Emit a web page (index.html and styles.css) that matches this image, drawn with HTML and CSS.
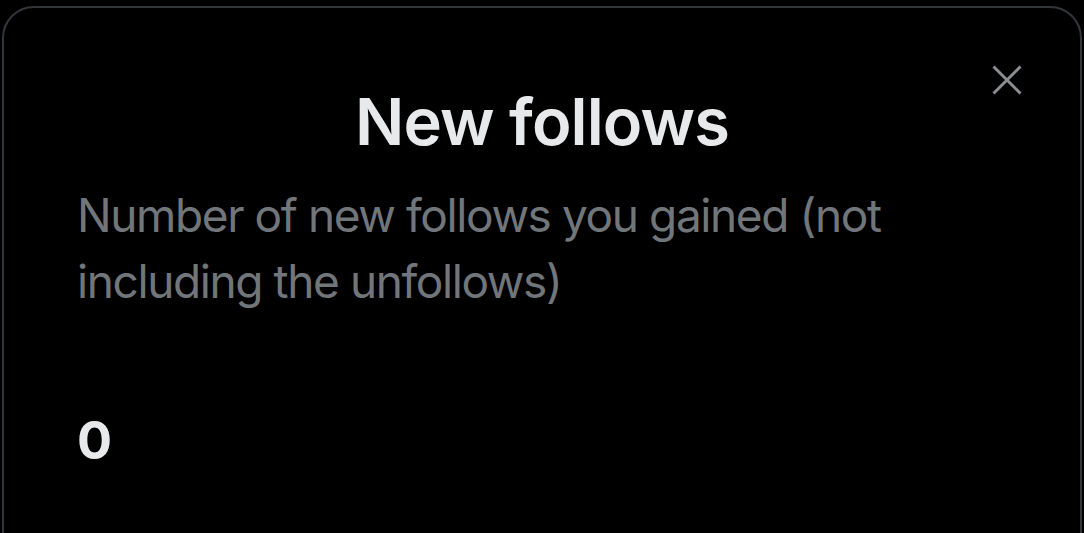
FILE: index.html
```html
<!DOCTYPE html>
<html lang="en">
<head>
  <meta charset="UTF-8">
  <meta name="viewport" content="width=device-width, initial-scale=1">
  <title>New follows</title>
  <link rel="stylesheet" href="styles.css">
</head>
<body>

  <div class="card">
    <button class="close-btn" aria-label="Close">
      <svg viewBox="0 0 30 30" width="30" height="30">
        <path d="M1.5 1.5 L28.5 28.5 M28.5 1.5 L1.5 28.5" stroke="currentColor" stroke-width="3" fill="none"/>
      </svg>
    </button>
    <h2 class="title">New follows</h2>
    <p class="desc">Number of new follows you gained (not including the unfollows)</p>
    <div class="value">0</div>
  </div>

</body>
</html>
```

FILE: styles.css
```css
html, body {
  margin: 0;
  background-color: #000;
  height: 100%;
  overflow: hidden;
}

body {
  font-family: Inter, "Noto Sans", sans-serif;
  color: #e7e9ea;
  padding: 6px 2px 0 2px;
  box-sizing: border-box;
}

.card {
  position: relative;
  border: 2px solid #333639;
  border-radius: 32px;
  height: 560px;
  padding: 0 73px;
}

.close-btn {
  position: absolute;
  top: 57px;
  right: 58px;
  width: 30px;
  height: 30px;
  padding: 0;
  border: none;
  background: none;
  color: #8b8d90;
  cursor: pointer;
}

.close-btn svg {
  display: block;
}

.title {
  margin: 0;
  padding-top: 74px;
  text-align: center;
  font-size: 65px;
  font-weight: 600;
  line-height: 80px;
  letter-spacing: -0.9px;
}

.desc {
  margin: 20px 0 0;
  font-size: 46px;
  line-height: 66px;
  color: #71767b;
  max-width: 830px;
  letter-spacing: -1.4px;
}

.value {
  margin-top: 96px;
  font-size: 52px;
  line-height: 62px;
  font-weight: 700;
}
```
